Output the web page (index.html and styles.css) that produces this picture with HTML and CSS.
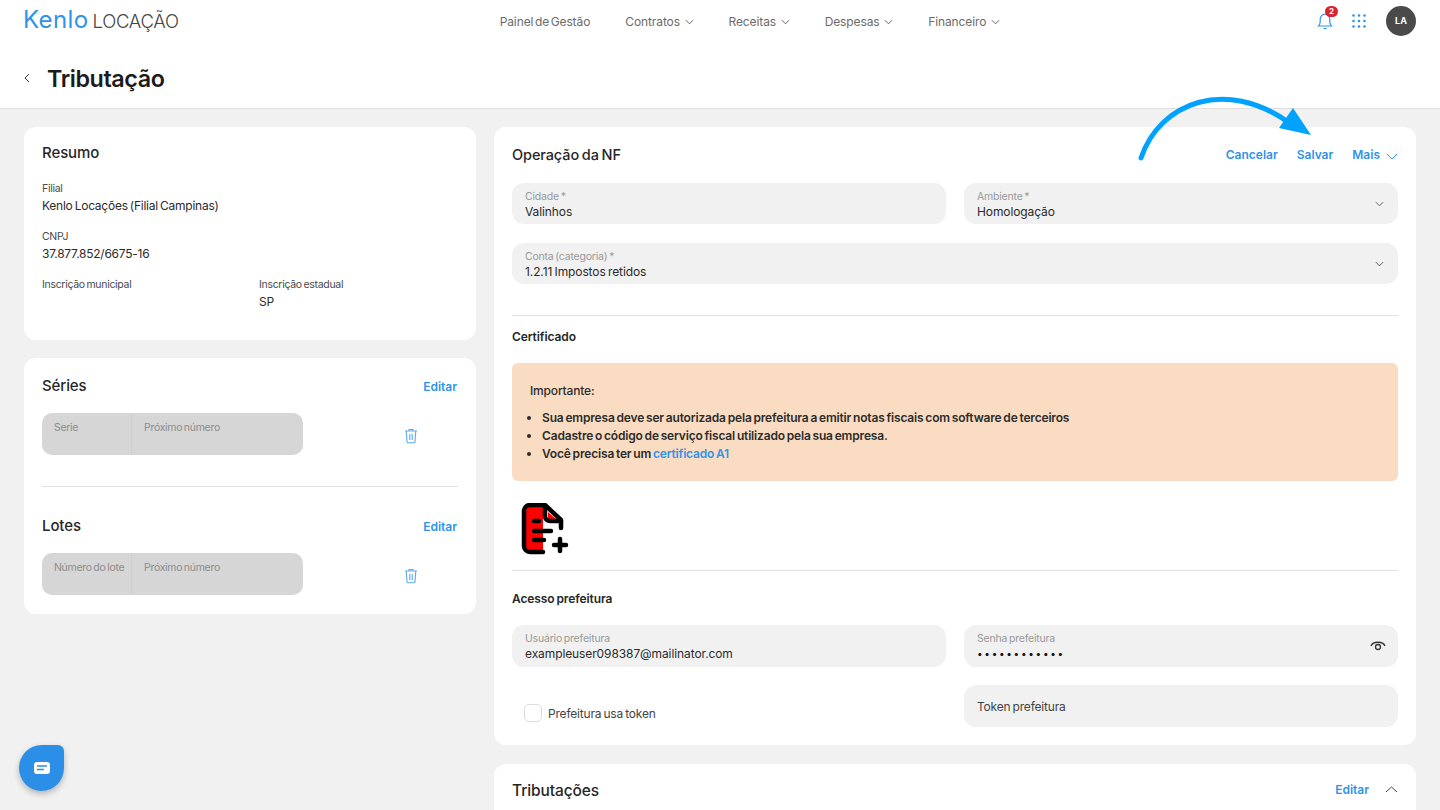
FILE: index.html
```html
<!DOCTYPE html>
<html lang="pt-BR">
<head>
  <meta charset="UTF-8" />
  <meta name="viewport" content="width=device-width, initial-scale=1.0" />
  <title>Tributação</title>
  <link rel="stylesheet" href="styles.css">
</head>
<body>
  <header class="top">
    <div class="nav">
      <a class="logo"><span class="logo-kenlo">Kenlo</span><span class="logo-sub">LOCAÇÃO</span></a>
      <nav class="menu">
        <a>Painel de Gestão</a>
        <a>Contratos <svg class="chev" viewBox="0 0 10 6"><path d="M1 1l4 4 4-4"/></svg></a>
        <a>Receitas <svg class="chev" viewBox="0 0 10 6"><path d="M1 1l4 4 4-4"/></svg></a>
        <a>Despesas <svg class="chev" viewBox="0 0 10 6"><path d="M1 1l4 4 4-4"/></svg></a>
        <a>Financeiro <svg class="chev" viewBox="0 0 10 6"><path d="M1 1l4 4 4-4"/></svg></a>
      </nav>
      <div class="tools">
        <div class="bell">
          <svg viewBox="0 0 16 18" width="16" height="18"><path d="M1.5 14h13c-1.3-1.3-1.7-2.6-1.7-4.5V7a4.8 4.8 0 0 0-9.6 0v2.5c0 1.9-.4 3.2-1.7 4.5z"/><path d="M6.5 16.5h3"/></svg>
          <span class="badge">2</span>
        </div>
        <svg class="apps" viewBox="0 0 14 14" width="14" height="14"><circle cx="1.5" cy="1.5" r="1.3"/><circle cx="7" cy="1.5" r="1.3"/><circle cx="12.5" cy="1.5" r="1.3"/><circle cx="1.5" cy="7" r="1.3"/><circle cx="7" cy="7" r="1.3"/><circle cx="12.5" cy="7" r="1.3"/><circle cx="1.5" cy="12.5" r="1.3"/><circle cx="7" cy="12.5" r="1.3"/><circle cx="12.5" cy="12.5" r="1.3"/></svg>
        <div class="avatar">LA</div>
      </div>
    </div>
    <div class="title-row">
      <svg class="back" viewBox="0 0 6 10" width="6" height="10"><path d="M5 1L1 5l4 4"/></svg>
      <h1>Tributação</h1>
    </div>
  </header>

  <main class="page">
    <div class="col-left">
      <section class="card resumo">
        <h2>Resumo</h2>
        <div class="info"><label>Filial</label><p>Kenlo Locações (Filial Campinas)</p></div>
        <div class="info"><label>CNPJ</label><p>37.877.852/6675-16</p></div>
        <div class="info-row">
          <div class="info"><label>Inscrição municipal</label></div>
          <div class="info"><label>Inscrição estadual</label><p>SP</p></div>
        </div>
      </section>

      <section class="card series">
        <div class="card-head"><h2>Séries</h2><a class="link">Editar</a></div>
        <div class="disabled-row">
          <div class="disabled-box">
            <span class="cell-a">Serie</span>
            <span class="cell-b">Próximo número</span>
          </div>
          <svg class="trash" viewBox="0 0 14 16" width="14" height="16"><path d="M1 3h12M5 3V1.5h4V3M2.2 3l.8 10.5c0 .8.6 1.3 1.3 1.3h5.4c.7 0 1.3-.5 1.3-1.3L11.8 3M5.8 6v6M8.2 6v6"/></svg>
        </div>
        <hr class="line">
        <div class="card-head lotes"><h2>Lotes</h2><a class="link">Editar</a></div>
        <div class="disabled-row">
          <div class="disabled-box">
            <span class="cell-a">Número do lote</span>
            <span class="cell-b">Próximo número</span>
          </div>
          <svg class="trash" viewBox="0 0 14 16" width="14" height="16"><path d="M1 3h12M5 3V1.5h4V3M2.2 3l.8 10.5c0 .8.6 1.3 1.3 1.3h5.4c.7 0 1.3-.5 1.3-1.3L11.8 3M5.8 6v6M8.2 6v6"/></svg>
        </div>
      </section>
    </div>

    <div class="col-right">
      <section class="card operacao">
        <div class="op-head">
          <h2>Operação da NF</h2>
          <div class="actions">
            <a class="link">Cancelar</a>
            <a class="link">Salvar</a>
            <a class="link">Mais <svg class="chev chev-blue" viewBox="0 0 12 7"><path d="M1 1l5 5 5-5"/></svg></a>
          </div>
        </div>
        <div class="grid-2">
          <div class="field"><label>Cidade *</label><span>Valinhos</span></div>
          <div class="field select"><label>Ambiente *</label><span>Homologação</span><svg class="chev field-chev" viewBox="0 0 10 6"><path d="M1 1l4 4 4-4"/></svg></div>
        </div>
        <div class="field select wide"><label>Conta (categoria) *</label><span>1.2.11 Impostos retidos</span><svg class="chev field-chev" viewBox="0 0 10 6"><path d="M1 1l4 4 4-4"/></svg></div>
        <hr class="line line-cert">
        <h3>Certificado</h3>
        <div class="notice">
          <p>Importante:</p>
          <ul>
            <li>Sua empresa deve ser autorizada pela prefeitura a emitir notas fiscais com software de terceiros</li>
            <li>Cadastre o código de serviço fiscal utilizado pela sua empresa.</li>
            <li>Você precisa ter um <a class="link-inline">certificado A1</a></li>
          </ul>
        </div>
        <svg class="file-add" viewBox="0 0 48 52" width="48" height="52">
          <path class="fa-red" d="M5 3h17v46H5z"/>
          <path class="fa-red" d="M27 9v7h8z"/>
          <path class="fa-line" d="M22 49H9a6 6 0 0 1-6-6V8a6 6 0 0 1 6-6h15l16 15v8"/>
          <path class="fa-line" d="M24 3v10a5 5 0 0 0 5 5h11"/>
          <path class="fa-line" d="M13 18h5M13 28h17M13 37h10M39 36v12M33 42h12"/>
        </svg>
        <hr class="line line-acesso">
        <h3>Acesso prefeitura</h3>
        <div class="grid-2 acesso">
          <div class="field"><label>Usuário prefeitura</label><span>exampleuser098387@mailinator.com</span></div>
          <div class="field select"><label>Senha prefeitura</label><span class="dots">••••••••••••</span>
            <svg class="eye" viewBox="0 0 16 10" width="16" height="10"><path d="M1 5c2-5 12-5 14 0"/><circle cx="8" cy="6" r="2.5"/></svg>
          </div>
        </div>
        <div class="grid-2 token">
          <label class="check"><i></i>Prefeitura usa token</label>
          <div class="field plain">Token prefeitura</div>
        </div>
      </section>

      <section class="card tributacoes">
        <h2>Tributações</h2>
        <div class="actions">
          <a class="link">Editar</a>
          <svg class="chev-up" viewBox="0 0 13 7" width="13" height="7"><path d="M1 6l5.5-5 5.5 5"/></svg>
        </div>
      </section>
    </div>
  </main>

  <svg class="arrow" viewBox="0 0 180 50" width="180" height="50">
    <path class="arrow-line" d="M3 50C22-6 88-30 150 14"/>
    <path class="arrow-head" d="M155 0l-14 20 32 7z"/>
  </svg>

  <div class="chat">
    <svg viewBox="0 0 16 12" width="16" height="12"><rect width="16" height="12" rx="3" fill="#fff"/><path d="M3 4h10M3 7.5h7" stroke="#2b8fe8" stroke-width="1.3"/></svg>
  </div>
</body>
</html>
```

FILE: styles.css
```css
* {
  margin: 0;
  padding: 0;
  box-sizing: border-box;
}
html, body {
  height: 100vh;
  overflow: hidden;
}
body {
  background-color: #f1f1f1;
  font-family: Inter, "Noto Sans", sans-serif;
  color: #222;
  font-size: 13px;
  letter-spacing: -0.2px;
  word-spacing: -1px;
}
a {
  cursor: pointer;
}

/* topo */
.top {
  background: #fff;
  height: 109px;
  border-bottom: 1px solid #e0e0e0;
  padding: 0 24px;
}
.nav {
  height: 42px;
  display: flex;
  align-items: center;
  position: relative;
}
.logo {
  display: flex;
  align-items: baseline;
  margin-top: -4px;
  margin-left: -1px;
}
.logo-kenlo {
  font-size: 24px;
  font-weight: 400;
  color: #2f93ea;
  letter-spacing: 0.4px;
}
.logo-sub {
  font-size: 18.5px;
  font-weight: 300;
  color: #444;
  margin-left: 4px;
  letter-spacing: -0.3px;
}
.menu {
  display: flex;
  gap: 35px;
  margin-left: 321px;
  color: #6b6b6b;
  font-size: 12px;
  letter-spacing: -0.1px;
  word-spacing: -1.7px;
}
.chev {
  width: 9px;
  height: 6px;
  margin-left: 3px;
  vertical-align: 1px;
  fill: none;
  stroke: #555;
  stroke-width: 1;
}
.tools {
  margin-left: auto;
  display: flex;
  align-items: center;
  gap: 20px;
}
.bell {
  position: relative;
  width: 16px;
  height: 18px;
  margin-right: -1px;
}
.bell svg {
  fill: none;
  stroke: #2f93ea;
  stroke-width: 1.2;
  display: block;
}
.badge {
  position: absolute;
  top: -6px;
  left: 8px;
  width: 13px;
  height: 11px;
  border-radius: 6px;
  background: #d9232e;
  color: #fff;
  font-size: 8px;
  font-weight: 700;
  line-height: 11px;
  text-align: center;
  letter-spacing: 0;
}
.apps {
  fill: #2f93ea;
}
.avatar {
  width: 30px;
  height: 30px;
  border-radius: 50%;
  background: #4a4a4a;
  color: #fff;
  font-size: 9px;
  font-weight: 700;
  line-height: 30px;
  text-align: center;
  letter-spacing: 0;
}
.title-row {
  display: flex;
  align-items: center;
  height: 72px;
}
.back {
  fill: none;
  stroke: #333;
  stroke-width: 1;
}
h1 {
  font-size: 23.3px;
  font-weight: 600;
  color: #1c1c1c;
  margin-left: 17px;
  letter-spacing: -0.4px;
}

/* colunas */
.page {
  display: flex;
  gap: 18px;
  padding: 18px 24px 0;
}
.col-left {
  width: 452px;
  display: flex;
  flex-direction: column;
  gap: 18px;
  flex: none;
}
.col-right {
  width: 922px;
  display: flex;
  flex-direction: column;
  gap: 19px;
  flex: none;
}
.card {
  background: #fff;
  border-radius: 12px;
}
h2 {
  font-size: 15px;
  font-weight: 500;
  color: #262626;
  letter-spacing: -0.1px;
}
h3 {
  font-size: 12px;
  font-weight: 600;
  color: #262626;
  letter-spacing: -0.1px;
}
.link {
  color: #2f93ea;
  font-size: 12px;
  font-weight: 600;
  letter-spacing: 0;
}

/* resumo */
.resumo {
  height: 213px;
  padding: 16px 18px;
}
.resumo h2 {
  margin-bottom: 20px;
}
.info {
  margin-bottom: 16px;
}
.info label {
  display: block;
  font-size: 10.5px;
  color: #4a4a4a;
  line-height: 14px;
  margin-bottom: 2px;
  letter-spacing: -0.3px;
}
.info p {
  font-size: 12px;
  color: #2b2b2b;
  line-height: 16px;
  letter-spacing: -0.25px;
}
.info-row {
  display: grid;
  grid-template-columns: 217px 1fr;
}

/* series e lotes */
.series {
  height: 256px;
  padding: 17px 18px 0;
}
.card-head {
  display: flex;
  justify-content: space-between;
  align-items: center;
  height: 20px;
  padding-right: 1px;
}
.card-head .link {
  margin-top: 2px;
}
.lotes {
  margin-top: 28px;
}
.disabled-row {
  display: flex;
  align-items: center;
  margin-top: 18px;
}
.disabled-box {
  width: 261px;
  height: 42px;
  background: #d6d6d6;
  border-radius: 10px;
  display: grid;
  grid-template-columns: 90px 1fr;
  font-size: 10.5px;
  letter-spacing: -0.3px;
  color: #8c8c8c;
}
.cell-a {
  padding: 8px 0 0 12px;
  border-right: 1px solid #cfcfcf;
  white-space: nowrap;
}
.cell-b {
  padding: 8px 0 0 12px;
}
.trash {
  margin: 4px 0 0 101px;
  fill: none;
  stroke: #5aa9ee;
  stroke-width: 1.1;
}
.line {
  border: 0;
  border-top: 1px solid #e2e2e2;
}
.series .line {
  margin-top: 31px;
}

/* operacao */
.operacao {
  height: 618px;
  padding: 0 18px;
  position: relative;
}
.op-head {
  display: flex;
  justify-content: space-between;
  align-items: center;
  height: 56px;
  padding-bottom: 2px;
}
.op-head h2 {
  font-size: 14.5px;
}
.actions {
  display: flex;
  align-items: center;
  gap: 19px;
}
.chev-blue {
  width: 12px;
  height: 7px;
  margin-left: 4px;
  vertical-align: -1px;
  stroke: #2f93ea;
}
.grid-2 {
  display: grid;
  grid-template-columns: 434px 434px;
  gap: 18px;
}
.field {
  height: 41px;
  background: #f1f1f1;
  border-radius: 12px;
  padding: 8px 13px 0;
  position: relative;
}
.field label {
  display: block;
  font-size: 10.5px;
  line-height: 12px;
  color: #999;
}
.field span {
  display: block;
  font-size: 12px;
  line-height: 15px;
  margin-top: 1px;
  color: #2b2b2b;
  letter-spacing: -0.1px;
}
.wide {
  margin-top: 19px;
}
.field-chev {
  position: absolute;
  right: 14px;
  top: 18px;
  margin: 0;
}
.line-cert {
  margin-top: 31px;
}
.operacao h3 {
  line-height: 14px;
}
.line-cert + h3 {
  margin-top: 14px;
}
.notice {
  margin-top: 19px;
  height: 118px;
  background: #fadcc2;
  border-radius: 6px;
  padding: 20px 18px;
  font-size: 12px;
  font-weight: 600;
  color: #2c2c2c;
  letter-spacing: -0.17px;
}
.notice p {
  font-weight: 500;
}
.notice ul {
  margin-top: 11px;
  padding-left: 12px;
  list-style-position: outside;
  line-height: 18px;
}
.link-inline {
  color: #2f93ea;
}
.file-add {
  display: block;
  margin: 22px 0 0 9px;
}
.fa-red {
  fill: #f00;
}
.fa-line {
  fill: none;
  stroke: #000;
  stroke-width: 4.5;
  stroke-linecap: round;
  stroke-linejoin: round;
}
.line-acesso {
  margin-top: 15px;
}
.line-acesso + h3 {
  margin-top: 21px;
}
.acesso {
  margin-top: 19px;
}
.acesso .field,
.plain {
  height: 42px;
}
.field .dots {
  letter-spacing: 1.7px;
  font-size: 10px;
  color: #111;
}
.eye {
  position: absolute;
  right: 12px;
  top: 16px;
  fill: none;
  stroke: #333;
  stroke-width: 1.3;
}
.token {
  margin-top: 18px;
}
.check {
  display: flex;
  align-items: center;
  gap: 6px;
  padding-left: 12px;
  padding-top: 14px;
  font-size: 12px;
  color: #444;
  letter-spacing: -0.2px;
}
.check i {
  width: 18px;
  height: 18px;
  background: #fff;
  border: 1px solid #dcdcdc;
  border-radius: 5px;
}
.plain {
  padding: 0 13px;
  line-height: 44px;
  font-size: 12px;
  color: #444;
}

/* tributacoes */
.tributacoes {
  height: 60px;
  padding: 0 18px;
  display: flex;
  justify-content: space-between;
  align-items: flex-start;
}
.tributacoes h2 {
  margin-top: 17px;
  font-size: 15.5px;
}
.tributacoes .actions {
  margin-top: 18px;
  gap: 16px;
}
.chev-up {
  fill: none;
  stroke: #444;
  stroke-width: 1;
}

/* por cima */
.arrow {
  position: absolute;
  left: 1138px;
  top: 108px;
  overflow: visible;
}
.arrow-line {
  fill: none;
  stroke: #00a2ff;
  stroke-width: 5;
  stroke-linecap: round;
}
.arrow-head {
  fill: #00a2ff;
}
.chat {
  position: absolute;
  left: 19px;
  top: 745px;
  width: 45px;
  height: 46px;
  background: #2b8fe8;
  border-radius: 50% 6px 50% 50%;
  box-shadow: 0 3px 6px rgba(0, 0, 0, 0.25);
  display: flex;
  align-items: center;
  justify-content: center;
}
```
